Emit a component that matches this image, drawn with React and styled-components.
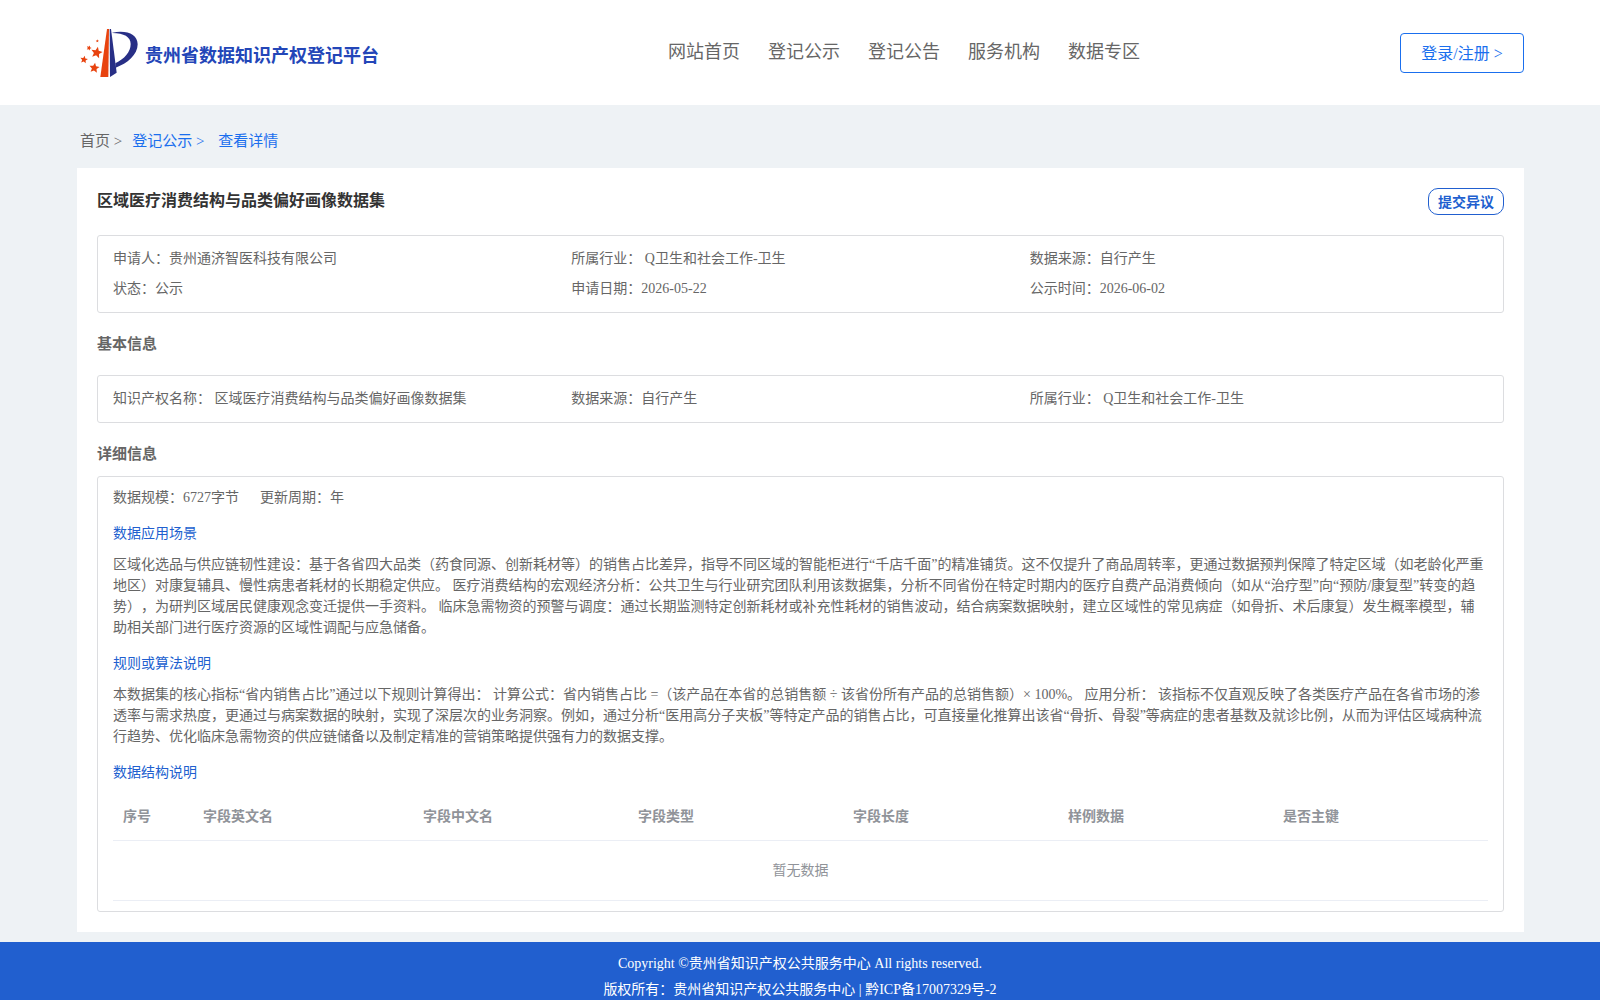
import React from "react";
import styled, { createGlobalStyle } from "styled-components";

const navItems = ["网站首页", "登记公示", "登记公告", "服务机构", "数据专区"];

const summary = [
  "申请人：贵州通济智医科技有限公司",
  "所属行业： Q卫生和社会工作-卫生",
  "数据来源：自行产生",
  "状态：公示",
  "申请日期：2026-05-22",
  "公示时间：2026-06-02",
];

const basic = [
  "知识产权名称： 区域医疗消费结构与品类偏好画像数据集",
  "数据来源：自行产生",
  "所属行业： Q卫生和社会工作-卫生",
];

const columns = [
  { title: "序号", width: 80 },
  { title: "字段英文名", width: 220 },
  { title: "字段中文名" },
  { title: "字段类型" },
  { title: "字段长度" },
  { title: "样例数据" },
  { title: "是否主键" },
];

const stars = [
  { x: 110, y: 128, r: 18, turn: 12 },
  { x: 87, y: 114, r: 8, turn: 20 },
  { x: 112, y: 93, r: 5, turn: 0 },
  { x: 72, y: 149, r: 12, turn: 10 },
  { x: 103, y: 174, r: 16, turn: 8 },
];

const starPoints = (r) =>
  Array.from({ length: 10 }, (_, i) => {
    const radius = i % 2 ? r * 0.46 : r;
    const angle = (Math.PI / 5) * i - Math.PI / 2;
    return `${radius * Math.cos(angle)},${radius * Math.sin(angle)}`;
  }).join(" ");

const Logo = () => (
  <svg width="58" height="50" viewBox="60 54 174 150" aria-hidden="true">
    {stars.map((s) => (
      <polygon
        key={s.x}
        points={starPoints(s.r)}
        transform={`translate(${s.x} ${s.y}) rotate(${s.turn})`}
        fill="#e8430f"
      />
    ))}
    <path d="M141 57h6l-2 144h-24z" fill="#e8430f" />
    <path d="M149 57h4l17 131-20 13z" fill="#282f86" />
    <path
      d="M157 68c43-9 76 5 76 35 0 31-31 58-66 70l-1-13c27-13 46-34 46-58 0-22-20-32-55-33z"
      fill="#282f86"
    />
  </svg>
);

const App = () => {
  return (
    <>
      <GlobalStyle />
      <Header>
        <Brand href="#">
          <Logo />
          <span>贵州省数据知识产权登记平台</span>
        </Brand>
        <Nav>
          {navItems.map((item) => (
            <a href="#" key={item}>
              {item}
            </a>
          ))}
        </Nav>
        <LoginButton>登录/注册 &gt;</LoginButton>
      </Header>
      <Main>
        <Breadcrumb>
          <Crumb href="#">首页 &gt;</Crumb>
          <Crumb href="#" $active>
            登记公示 &gt;
          </Crumb>
          <Crumb href="#" $active>
            &nbsp;查看详情
          </Crumb>
        </Breadcrumb>
        <Card>
          <TitleRow>
            <h1>区域医疗消费结构与品类偏好画像数据集</h1>
            <ObjectionButton>提交异议</ObjectionButton>
          </TitleRow>
          <InfoGrid>
            {summary.map((text) => (
              <span key={text}>{text}</span>
            ))}
          </InfoGrid>
          <SectionTitle>基本信息</SectionTitle>
          <InfoGrid>
            {basic.map((text) => (
              <span key={text}>{text}</span>
            ))}
          </InfoGrid>
          <SectionTitle $compact>详细信息</SectionTitle>
          <Details>
            <Scale>
              <span>数据规模：6727字节</span>
              <span>更新周期：年</span>
            </Scale>
            <h3>数据应用场景</h3>
            <p>
              区域化选品与供应链韧性建设：基于各省四大品类（药食同源、创新耗材等）的销售占比差异，指导不同区域的智能柜进行“千店千面”的精准铺货。这不仅提升了商品周转率，更通过数据预判保障了特定区域（如老龄化严重地区）对康复辅具、慢性病患者耗材的长期稳定供应。
              医疗消费结构的宏观经济分析：公共卫生与行业研究团队利用该数据集，分析不同省份在特定时期内的医疗自费产品消费倾向（如从“治疗型”向“预防/康复型”转变的趋势），为研判区域居民健康观念变迁提供一手资料。
              临床急需物资的预警与调度：通过长期监测特定创新耗材或补充性耗材的销售波动，结合病案数据映射，建立区域性的常见病症（如骨折、术后康复）发生概率模型，辅助相关部门进行医疗资源的区域性调配与应急储备。
            </p>
            <h3>规则或算法说明</h3>
            <p>
              本数据集的核心指标“省内销售占比”通过以下规则计算得出：
              计算公式：省内销售占比 =（该产品在本省的总销售额 ÷
              该省份所有产品的总销售额）× 100%。 应用分析：
              该指标不仅直观反映了各类医疗产品在各省市场的渗透率与需求热度，更通过与病案数据的映射，实现了深层次的业务洞察。例如，通过分析“医用高分子夹板”等特定产品的销售占比，可直接量化推算出该省“骨折、骨裂”等病症的患者基数及就诊比例，从而为评估区域病种流行趋势、优化临床急需物资的供应链储备以及制定精准的营销策略提供强有力的数据支撑。
            </p>
            <h3>数据结构说明</h3>
            <Table>
              <colgroup>
                {columns.map((col) => (
                  <col key={col.title} width={col.width} />
                ))}
              </colgroup>
              <thead>
                <tr>
                  {columns.map((col) => (
                    <th key={col.title}>{col.title}</th>
                  ))}
                </tr>
              </thead>
              <tbody>
                <tr>
                  <td colSpan={columns.length}>暂无数据</td>
                </tr>
              </tbody>
            </Table>
          </Details>
        </Card>
      </Main>
      <Footer>
        <span>Copyright ©贵州省知识产权公共服务中心 All rights reserved.</span>
        <span>版权所有：贵州省知识产权公共服务中心 | 黔ICP备17007329号-2</span>
      </Footer>
    </>
  );
};

export default App;

const GlobalStyle = createGlobalStyle`
  * {
    box-sizing: border-box;
    margin: 0;
    padding: 0;
  }

  body {
    background: #eef2f5;
    color: #666;
    font-family: "Liberation Serif", "Noto Sans CJK SC", serif;
    font-size: 14px;
    text-spacing-trim: space-all;
  }

  a {
    color: inherit;
    text-decoration: none;
  }

  button {
    background: white;
    font-family: inherit;
    cursor: pointer;
  }
`;

const Header = styled.header`
  display: flex;
  align-items: center;
  justify-content: space-between;
  height: 105px;
  padding: 0 76px 0 77px;
  background: white;
`;

const Brand = styled.a`
  display: flex;
  align-items: center;
  gap: 7px;
  min-width: 331px;
  padding-left: 3px;

  span {
    padding-top: 6px;
    color: #2346b8;
    font-size: 18px;
    font-weight: bold;
    line-height: 24px;
  }
`;

const Nav = styled.nav`
  display: flex;
  gap: 28px;
  padding-bottom: 2px;
  font-size: 18px;
  line-height: 24px;
`;

const LoginButton = styled.button`
  min-width: 124px;
  height: 40px;
  padding: 0 20px 2px;
  border: 1px solid #1a6fee;
  border-radius: 4px;
  color: #1a6fee;
  font-size: 16px;
`;

const Main = styled.main`
  padding: 0 76px 10px 77px;
`;

const Breadcrumb = styled.nav`
  display: flex;
  align-items: center;
  gap: 10px;
  height: 63px;
  padding: 6px 3px 0;
  font-size: 15px;
`;

const Crumb = styled.a`
  color: ${(props) => (props.$active ? "#1a6fee" : "#666")};
`;

const Card = styled.section`
  padding: 20px;
  background: white;
`;

const TitleRow = styled.div`
  display: flex;
  justify-content: space-between;
  align-items: flex-start;
  height: 47px;

  h1 {
    color: #333;
    font-size: 16px;
    line-height: 26px;
  }
`;

const ObjectionButton = styled.button`
  height: 27px;
  padding: 0 9px 2px;
  border: 1px solid #215fcf;
  border-radius: 10px;
  color: #215fcf;
  font-size: 14px;
  font-weight: bold;
`;

const InfoGrid = styled.div`
  display: grid;
  grid-template-columns: repeat(3, 1fr);
  padding: 8px 15px;
  border: 1px solid #dcdde0;
  border-radius: 3px;
  line-height: 30px;
`;

const SectionTitle = styled.h2`
  height: ${(props) => (props.$compact ? 53 : 62)}px;
  font-size: 15px;
  line-height: 62px;
`;

const Details = styled.div`
  padding: 10px 15px;
  border: 1px solid #dcdde0;
  border-radius: 3px;
  line-height: 21px;

  h3 {
    margin: 15px 0 10px;
    color: #215fcf;
    font-size: 14px;
    font-weight: normal;
  }
`;

const Scale = styled.div`
  display: flex;
  gap: 21px;
`;

const Table = styled.table`
  width: 100%;
  table-layout: fixed;
  border-collapse: separate;
  border-spacing: 0;
  color: #909399;

  th,
  td {
    border-bottom: 1px solid #ebeef5;
  }

  th {
    height: 48px;
    padding: 0 10px;
    text-align: left;
  }

  td {
    height: 60px;
    text-align: center;
  }
`;

const Footer = styled.footer`
  display: flex;
  flex-direction: column;
  align-items: center;
  gap: 6px;
  padding-top: 12px;
  background: #215fcf;
  color: white;
  line-height: 20px;
`;
